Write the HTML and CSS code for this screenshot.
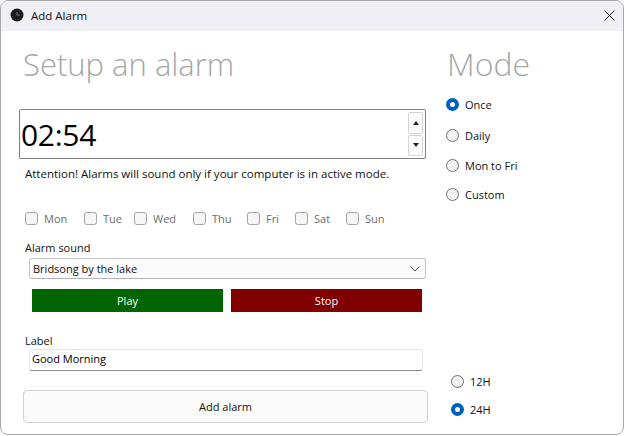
FILE: index.html
```html
<!DOCTYPE HTML>
<html>
<head>
  <meta charset="UTF-8">
  <title>Add Alarm</title>
  <link rel="stylesheet" href="styles.css">
</head>
<body>
  <div class="window">
    <div class="titlebar">
      <svg class="app-icon" width="14" height="14" viewBox="0 0 14 14">
        <circle cx="7" cy="7" r="6.5" fill="#1c1c1c"/>
        <path d="M7 4V7H10" fill="none" stroke="#777" stroke-width="1"/>
      </svg>
      <span class="title-text">Add Alarm</span>
      <svg class="close-icon" width="11" height="11" viewBox="0 0 11 11">
        <path d="M.5 .5L10.5 10.5M10.5 .5L.5 10.5" stroke="#1a1a1a" stroke-width="1" fill="none"/>
      </svg>
    </div>
    <div class="content">
      <div class="left">
        <h1 class="heading setup-heading">Setup an alarm</h1>
        <div class="time-box">
          <span class="time-value">02:54</span>
          <div class="spin">
            <div class="spin-btn"><svg width="6" height="4" viewBox="0 0 6 4"><path d="M3 0L6 4H0Z" fill="#222"/></svg></div>
            <div class="spin-btn"><svg width="6" height="4" viewBox="0 0 6 4"><path d="M0 0H6L3 4Z" fill="#222"/></svg></div>
          </div>
        </div>
        <p class="notice">Attention! Alarms will sound only if your computer is in active mode.</p>
        <div class="days">
          <label class="day day-mon"><span class="check"></span>Mon</label>
          <label class="day day-tue"><span class="check"></span>Tue</label>
          <label class="day day-wed"><span class="check"></span>Wed</label>
          <label class="day day-thu"><span class="check"></span>Thu</label>
          <label class="day day-fri"><span class="check"></span>Fri</label>
          <label class="day day-sat"><span class="check"></span>Sat</label>
          <label class="day day-sun"><span class="check"></span>Sun</label>
        </div>
        <div class="field-label sound-label">Alarm sound</div>
        <div class="select">
          <span>Bridsong by the lake</span>
          <svg width="10" height="6" viewBox="0 0 10 6"><path d="M.5 .5L5 5L9.5 .5" fill="none" stroke="#555" stroke-width="1"/></svg>
        </div>
        <div class="player">
          <button class="play">Play</button>
          <button class="stop">Stop</button>
        </div>
        <div class="field-label name-label">Label</div>
        <div class="text-input">Good Morning</div>
        <button class="add-btn">Add alarm</button>
      </div>
      <div class="right">
        <h1 class="heading mode-heading">Mode</h1>
        <div class="modes">
          <label class="radio on mode-once"><span class="dot"></span>Once</label>
          <label class="radio mode-daily"><span class="dot"></span>Daily</label>
          <label class="radio mode-week"><span class="dot"></span>Mon to Fri</label>
          <label class="radio mode-custom"><span class="dot"></span>Custom</label>
        </div>
        <div class="clock-format">
          <label class="radio"><span class="dot"></span>12H</label>
          <label class="radio on"><span class="dot"></span>24H</label>
        </div>
      </div>
    </div>
  </div>
</body>
</html>
```

FILE: styles.css
```css
html, body
{
  margin: 0;
  height: 100%;
}
body
{
  background-color: #ffffff;
  font-family: "Open Sans", "Liberation Sans", sans-serif;
  font-size: 11px;
  color: #111;
  overflow: hidden;
}
.window
{
  box-sizing: border-box;
  width: 624px;
  height: 435px;
  border: 1px solid #a9a9a9;
  border-radius: 8px;
  background-color: #fff;
  overflow: hidden;
}
.titlebar
{
  box-sizing: border-box;
  height: 30px;
  background-color: #f1eff6;
  display: flex;
  align-items: center;
  padding: 0 8px 2px 9px;
}
.app-icon
{
  margin-right: 7px;
}
.title-text
{
  font-size: 11.5px;
  flex: 1;
}
.content
{
  display: flex;
}
.left
{
  width: 428px;
  box-sizing: border-box;
  padding-left: 18px;
}
.heading
{
  margin: 0;
  font-size: 31px;
  font-weight: 300;
  line-height: 40px;
  color: #a6a6a6;
}
.setup-heading
{
  margin: 13px 0 0 4px;
}
.time-box
{
  box-sizing: border-box;
  width: 407px;
  height: 50px;
  margin-top: 25px;
  border: 1px solid #7f7f7f;
  border-radius: 2px;
  display: flex;
  justify-content: space-between;
  align-items: center;
  padding: 2px;
}
.time-value
{
  font-size: 30px;
  color: #000;
  margin-left: -1px;
  letter-spacing: -.3px;
}
.spin
{
  width: 15px;
  height: 44px;
  display: flex;
  flex-direction: column;
  gap: 1px;
}
.spin-btn
{
  flex: 1;
  border: 1px solid #d4d4d4;
  border-radius: 2px;
  display: flex;
  align-items: center;
  justify-content: center;
  background-color: #fdfdfd;
}
.notice
{
  margin: 7px 0 0 6px;
  font-size: 11.5px;
  line-height: 16px;
  white-space: nowrap;
}
.days
{
  display: flex;
  margin: 29px 0 0 6px;
  height: 15px;
}
.day
{
  display: flex;
  align-items: center;
  color: #6d6d6d;
}
.check
{
  width: 11px;
  height: 11px;
  border: 1px solid #a6a6a6;
  border-radius: 3px;
  background-color: #f6f6f6;
  margin-right: 6px;
}
.day-mon { width: 59px; }
.day-tue { width: 50px; }
.day-wed { width: 59px; }
.day-thu { width: 54px; }
.day-fri { width: 48px; }
.day-sat { width: 51px; }
.field-label
{
  margin-left: 6px;
  line-height: 14px;
}
.sound-label
{
  margin-top: 15px;
}
.select
{
  box-sizing: border-box;
  width: 397px;
  height: 21px;
  margin: 3px 0 0 10px;
  padding: 0 5px 0 3px;
  border: 1px solid #c6c6c6;
  border-bottom-color: #b4b4b4;
  border-radius: 3px;
  background-color: #fbfbfb;
  display: flex;
  align-items: center;
  justify-content: space-between;
}
.player
{
  display: flex;
  gap: 8px;
  margin: 10px 0 0 13px;
}
button
{
  font-family: inherit;
  font-size: 11px;
  border: none;
  padding: 0;
}
.play, .stop
{
  width: 191px;
  height: 23px;
  color: #fff;
}
.play
{
  background-color: #006400;
}
.stop
{
  background-color: #800000;
}
.name-label
{
  margin-top: 22px;
}
.text-input
{
  box-sizing: border-box;
  width: 394px;
  height: 22px;
  margin: 1px 0 0 10px;
  padding: 0 2px;
  border: 1px solid #e4e4e4;
  border-bottom: 1px solid #8a8a8a;
  border-radius: 3px;
  line-height: 18px;
  color: #000;
}
.add-btn
{
  display: block;
  box-sizing: border-box;
  width: 405px;
  height: 33px;
  margin: 19px 0 0 4px;
  border: 1px solid #d2d2d2;
  border-radius: 4px;
  background-color: #fbfbfb;
  color: #111;
}
.right
{
  flex: 1;
  padding-left: 17px;
}
.mode-heading
{
  margin: 13px 0 0 1px;
  font-size: 32px;
}
.modes
{
  display: flex;
  flex-direction: column;
  margin-top: 12px;
}
.radio
{
  display: flex;
  align-items: center;
  height: 16px;
}
.mode-daily { margin-top: 15px; }
.mode-week { margin-top: 14px; }
.mode-custom { margin-top: 13px; }
.dot
{
  box-sizing: border-box;
  width: 13px;
  height: 13px;
  border: 1px solid #6e6e6e;
  border-radius: 50%;
  background-color: #f2f2f2;
  margin-right: 6px;
}
.radio.on .dot
{
  border: 4px solid #0060b8;
  background-color: #fff;
}
.clock-format
{
  display: flex;
  flex-direction: column;
  gap: 12px;
  margin: 171px 0 0 5px;
}
```
